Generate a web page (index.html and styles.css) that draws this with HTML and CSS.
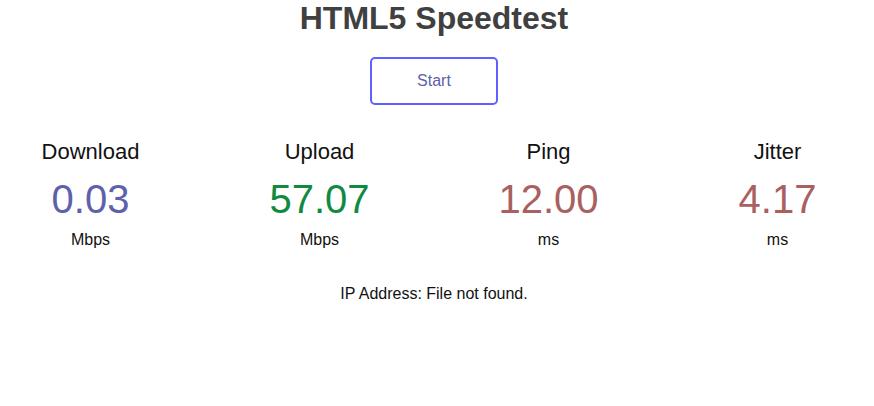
FILE: index.html
```html
<!DOCTYPE html>
<html>
<head>
<meta charset="utf-8">
<title>HTML5 Speedtest</title>
<link rel="stylesheet" href="styles.css">
</head>
<body>
<h1 class="title">HTML5 Speedtest</h1>
<div class="start-wrap"><div class="start-btn">Start</div></div>
<div class="tests">
  <div class="test-area">
    <div class="test-name">Download</div>
    <div class="meter-text dl">0.03</div>
    <div class="unit">Mbps</div>
  </div>
  <div class="test-area">
    <div class="test-name">Upload</div>
    <div class="meter-text ul">57.07</div>
    <div class="unit">Mbps</div>
  </div>
  <div class="test-area">
    <div class="test-name">Ping</div>
    <div class="meter-text ping">12.00</div>
    <div class="unit">ms</div>
  </div>
  <div class="test-area">
    <div class="test-name">Jitter</div>
    <div class="meter-text ping">4.17</div>
    <div class="unit">ms</div>
  </div>
</div>
<div class="ip">IP Address: File not found.</div>
</body>
</html>
```

FILE: styles.css
```css
html, body { background: #ffffff; }
body {
  margin: 0 14px 0 8px;
  font-family: "Liberation Sans", Arial, Helvetica, sans-serif;
  text-align: center;
  color: #111111;
}
.title {
  margin: 0;
  font-size: 32px;
  line-height: 37px;
  font-weight: bold;
  color: #404040;
}
.start-wrap {
  display: flex;
  justify-content: center;
  margin-top: 20px;
}
.start-btn {
  box-sizing: border-box;
  width: 128px;
  height: 48px;
  border: 2.4px solid #6060FF;
  border-radius: 5px;
  color: #6060AA;
  font-size: 16px;
  display: flex;
  align-items: center;
  justify-content: center;
}
.tests {
  display: grid;
  grid-template-columns: repeat(4, 1fr);
  column-gap: 64px;
  margin-top: 33.5px;
}
.test-area {
  display: flex;
  flex-direction: column;
  align-items: center;
}
.test-name {
  font-size: 22px;
  line-height: 26px;
}
.meter-text {
  font-size: 40px;
  line-height: 46px;
  margin-top: 11px;
}
.dl { color: #6060AA; }
.ul { color: #108A40; }
.ping { color: #AA6060; }
.unit {
  font-size: 16px;
  line-height: 18px;
  margin-top: 9px;
}
.ip {
  margin-top: 36px;
  font-size: 16px;
  line-height: 18px;
}
```
